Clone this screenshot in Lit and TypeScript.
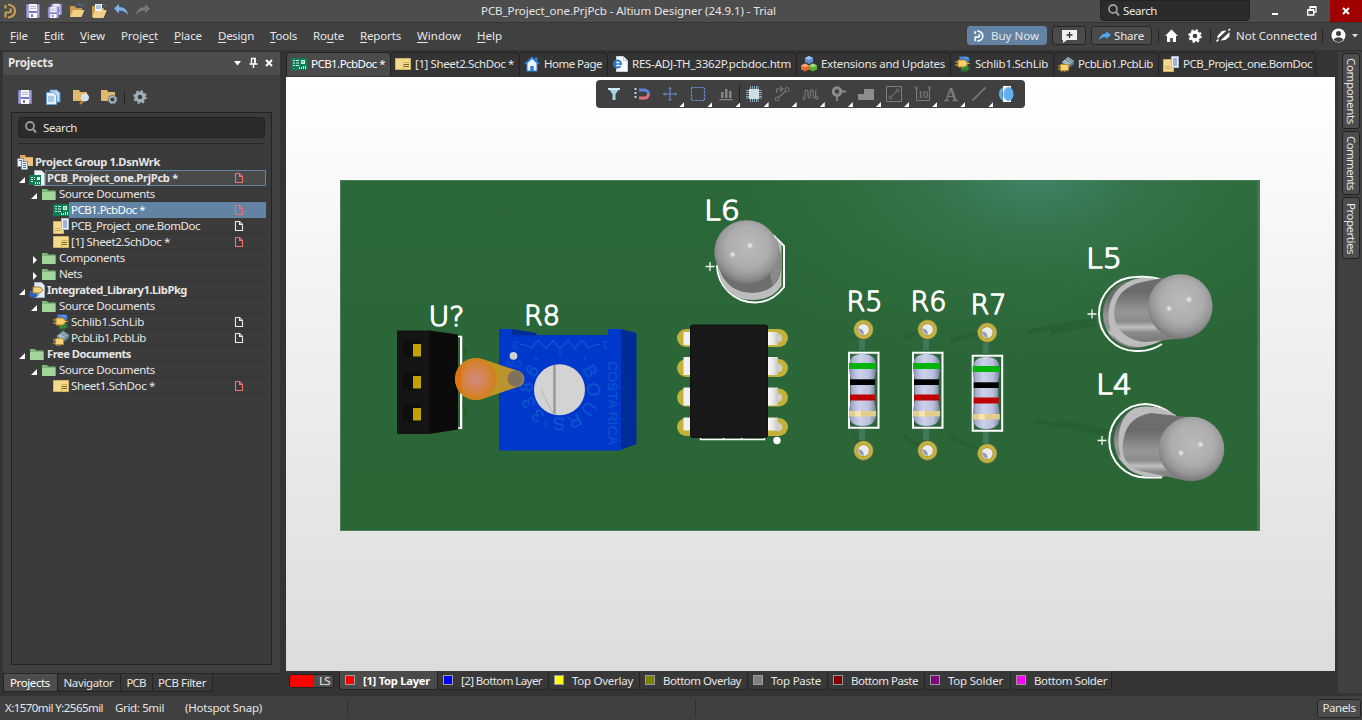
import { LitElement, html, svg, css, nothing } from "lit";
import { customElement, property } from "lit/decorators.js";

/** Single line of text, tracked so that it fills a given width. */
@customElement("ui-label")
class UiLabel extends LitElement {
  @property() text = "";
  @property({ type: Number }) w = 0;
  @property({ type: Number }) accel = -1;
  static styles = css`
    :host { display: block; flex: none; white-space: pre; line-height: 16px; }
    u { text-underline-offset: 2px; text-decoration-thickness: 1px; }
  `;
  firstUpdated() {
    const span = this.renderRoot.querySelector("span")!;
    const natural = span.offsetWidth ? span.getBoundingClientRect() : null;
    if (!natural || !this.w) return;
    const vertical = getComputedStyle(this).writingMode !== "horizontal-tb";
    const size = vertical ? natural.height : natural.width;
    span.style.letterSpacing = `${(this.w - size) / this.text.length}px`;
  }
  render() {
    const t = this.text, a = this.accel;
    return a < 0
      ? html`<span>${t}</span>`
      : html`<span>${t.slice(0, a)}<u>${t[a]}</u>${t.slice(a + 1)}</span>`;
  }
}

const label = (text: string, w: number, accel = -1) =>
  html`<ui-label .text=${text} .w=${w} .accel=${accel}></ui-label>`;

const icon = (body: unknown, w = 16, h = 16) =>
  html`<svg class="ic" width=${w} height=${h} viewBox="0 0 ${w} ${h}">${body}</svg>`;

const floppy = svg`<path d="M1 1h14v14H1z" fill="#7b79bd"/><path d="M2 2h2v12H2zM12 2h2v12h-2z" fill="#a5a3dc"/><path d="M4 1h8v7H4z" fill="#f4f4fb"/><path d="M5 3h6v1H5zM5 5h6v1H5z" fill="#b9b9d4"/><path d="M4 10h8v5H4z" fill="#fff"/><path d="M6 11h2v3H6z" fill="#7b79bd"/>`;
const folderY = svg`<path d="M1 3h5l1 2h6v3H4L1 14z" fill="#c99a4b"/><path d="M4 7h11.5l-3 7H1z" fill="#f2cf88"/>`;
const folderG = svg`<path d="M1 3h5l1 1.5h7.5V14H1z" fill="#7cb878"/><path d="M1 6h13.500v8H1z" fill="#a3d69a"/>`;
const pcbDoc = svg`<path d="M0 2h16v12H0z" fill="#0c7f55"/><path d="M2 4h2v1H2zM2 6.500h2v1H2zM2 9h2v1H2zM5 4h3v1H5zM5 6.500h3v1H5zM5 9h3v1H5zM10 4h4v4h-4zM8 11h1v2H8zM10 11h1v2h-1zM12 10h1v3h-1zM14 10h1v3h-1z" fill="#d9f2e4"/><path d="M11 5h2v2h-2z" fill="#7fc4a4"/>`;
const schDoc = svg`<path d="M.5 2.500h15v11H.5z" fill="#f3d98c" stroke="#d3b266"/><path d="M9 8.500h5M9 10.500h5" stroke="#7a6228" fill="none"/><path d="M8.500 7.500v5.500M8.500 6.500h6" stroke="#cfae5c" fill="none"/>`;
const bomDoc = svg`<path d="M.5 3.500h10v12H.5z" fill="#f3d98c" stroke="#d3b266"/><path d="M2 12.500h6M2 10.500h5" stroke="#d0ae60"/><path d="M8.500.5h7v11h-7z" fill="#eef3fb" stroke="#a9b8cf"/><path d="M10 3h4M10 5h4M10 7h4M10 9h4" stroke="#53719f"/>`;
const house = svg`<path d="M8 .5 0 8h2.500v7.500h11V8H16l-2.500-2.400V1.500H11v1.800z" fill="#2f80dc"/><path d="M8 3 3.500 7.200v7.300h3V10h3v4.500h3V7.200z" fill="#eaf3fd"/><path d="M6.500 10h3v5h-3z" fill="#2f80dc"/>`;
const ieDoc = svg`<path d="M4.500.5h7l4 4v11h-11z" fill="#fbfcfe" stroke="#c8d2df"/><path d="M11.500.5v4h4" fill="none" stroke="#b8c4d4"/><circle cx="5.500" cy="8" r="3.500" fill="none" stroke="#2c7fd0" stroke-width="2"/><path d="M3 8h6" stroke="#2c7fd0" stroke-width="1.500"/><path d="M8 9h2v1.200H8z" fill="#fbfcfe"/>`;
const cubes = svg`<path d="m8 0 4 2v4L8 8 4 6V2z" fill="#5c8fd6"/><path d="m8 0 4 2-4 2-4-2z" fill="#9cc0f0"/><path d="m4 7.500 4 2v4l-4 2-4-2v-4z" fill="#e2692f"/><path d="m4 7.500 4 2-4 2-4-2z" fill="#f7ab84"/><path d="m12 7.500 4 2v4l-4 2-4-2v-4z" fill="#55ad35"/><path d="m12 7.500 4 2-4 2-4-2z" fill="#a0dd80"/>`;
const schLib = svg`<path d="M4 .5h7q3.500 0 3.500 3T11 7H6z" fill="#3f7fe0"/><path d="M5 1.500h6q2 0 2.500 1z" fill="#8fb8f4"/><path d="M6 8.500h7v6H6z" fill="#2e8a34"/><path d="M7 15v1M9 15v1M11 15v1M13 11h2M13 13h2" stroke="#2e8a34"/><path d="M3 4h7l3 3.500L10 11H3z" fill="#f6cf6b" stroke="#ad8024"/><path d="M0 6h3M0 9h3M13 7.500h2" stroke="#d9ac4a"/>`;
const pcbLib = svg`<path d="m4 6 6-5 6 4v3l-6 5-6-4z" fill="#5f7885"/><path d="m4 6 6-5 6 4-6 5z" fill="#a3bbc6"/><path d="m7 3 6 4M9 2l6 4" stroke="#5f7885"/><path d="M2.500 8.500h8v6h-8z" fill="#f6d27a" stroke="#b58b32"/><path d="M0 10h2M0 13h2M4 15v1M7 15v1" stroke="#e2b75a"/>`;
const prjPcb = svg`<path d="M5.500.5h7l3 3v12h-10z" fill="#f1f3f8" stroke="#a9b1c4"/><path d="M0 5h12v10H0z" fill="#0c7f55"/><path d="M2 7h2v1H2zM2 9h2v1H2zM2 11h2v1H2zM5 7h1v1H5zM5 9h1v1H5zM8 7h3v3H8zM6 12h1v2H6zM8 12h1v2H8zM10 12h1v2h-1z" fill="#d9f2e4"/>`;
const libPkg = svg`<path d="M5.500.5h7l3 3v12h-10z" fill="#e4eaf4" stroke="#a9b1c4"/><path d="M1 9h7v6H1z" fill="#2d62b5"/><path d="M0 11h10M0 13h10M3 8v8M6 8v8" stroke="#2d62b5"/><path d="M4 5h7l3 3-3 3H4z" fill="#f6d27a" stroke="#a97f2a"/>`;
const group = svg`<path d="M3 1h5l1 2h7v9H3z" fill="#e0a860"/><path d="M5 4h11v8H5z" fill="#efc184"/><path d="M.5 4.500h6v8h-6z" fill="#e8edf6" stroke="#7f8fae"/><path d="M4.500 7.500h6v8h-6z" fill="#e8edf6" stroke="#7f8fae"/><path d="M6 9.500h3M6 11.500h3M6 13.500h3M2 6.500h3" stroke="#54709c"/>`;
const magnifier = svg`<circle cx="5" cy="5" r="4" fill="none" stroke="#9a9a9a" stroke-width="1.800"/><path d="m8 8 3 3.500" stroke="#9a9a9a" stroke-width="2"/>`;
const gearPath = (c: string, hole: string) => svg`<circle cx="8" cy="8" r="5.400" fill=${c}/><circle cx="8" cy="8" r="5.800" fill="none" stroke=${c} stroke-width="2" stroke-dasharray="2.300 2.250"/><circle cx="8" cy="8" r="2.300" fill=${hole}/>`;
const altium = (c: string) => svg`<path d="M2.500 2v3.500M5 1.500q7 1 7 6.500T5 14.500M2.500 14.500V9.500h4q2-1 1-4" fill="none" stroke=${c} stroke-width="2.200" stroke-linejoin="round"/>`;
const chip = svg`<path d="M3 3h10v10H3z" fill="#c9dfe8"/><path d="M4.500 0v16M6.500 0v16M8.500 0v16M10.500 0v16M12 0v16M0 4.500h16M0 6.500h16M0 8.500h16M0 10.500h16M0 12h16" stroke="#8eb6c6" stroke-width=".9"/><path d="M3 3h10v10H3z" fill="#d0dde3"/>`;

const sheet = (c: string) => icon(svg`<path d="M.5.5h4l3 3v6h-7zM4.500.5v3h3" fill="none" stroke=${c} stroke-width="1.100"/>`, 9, 10);

interface Row { t: string; w: number; lvl: number; ic: unknown; tw?: "o" | "c"; b?: boolean; doc?: string; st?: string }
const RED = "#f07070", WHT = "#e8e8e8";
const rows: Row[] = [
  { t: "Project Group 1.DsnWrk", w: 125, lvl: 0, ic: group, b: true },
  { t: "PCB_Project_one.PrjPcb *", w: 131, lvl: 1, ic: prjPcb, tw: "o", b: true, doc: RED, st: "focus" },
  { t: "Source Documents", w: 96, lvl: 2, ic: folderG, tw: "o" },
  { t: "PCB1.PcbDoc *", w: 74, lvl: 3, ic: pcbDoc, doc: RED, st: "sel" },
  { t: "PCB_Project_one.BomDoc", w: 129, lvl: 3, ic: bomDoc, doc: WHT },
  { t: "[1] Sheet2.SchDoc *", w: 99, lvl: 3, ic: schDoc, doc: RED },
  { t: "Components", w: 66, lvl: 2, ic: folderG, tw: "c" },
  { t: "Nets", w: 23, lvl: 2, ic: folderG, tw: "c" },
  { t: "Integrated_Library1.LibPkg", w: 140, lvl: 1, ic: libPkg, tw: "o", b: true },
  { t: "Source Documents", w: 96, lvl: 2, ic: folderG, tw: "o" },
  { t: "Schlib1.SchLib", w: 73, lvl: 3, ic: schLib, doc: WHT },
  { t: "PcbLib1.PcbLib", w: 75, lvl: 3, ic: pcbLib, doc: WHT },
  { t: "Free Documents", w: 84, lvl: 1, ic: folderG, tw: "o", b: true },
  { t: "Source Documents", w: 96, lvl: 2, ic: folderG, tw: "o" },
  { t: "Sheet1.SchDoc *", w: 84, lvl: 3, ic: schDoc, doc: RED },
];

const menus: [string, number, number][] = [
  ["File", 18, 0], ["Edit", 20, 0], ["View", 25, 0], ["Project", 37, 5], ["Place", 28, 0], ["Design", 36, 0],
  ["Tools", 27, 0], ["Route", 31, 2], ["Reports", 41, 0], ["Window", 44, 0], ["Help", 25, 0],
];

// title, text width, tab width, icon
const docTabs: [string, number, number, unknown][] = [
  ["PCB1.PcbDoc *", 74, 104, pcbDoc], ["[1] Sheet2.SchDoc *", 99, 129, schDoc], ["Home Page", 58, 88, house],
  ["RES-ADJ-TH_3362P.pcbdoc.htm", 159, 189, ieDoc], ["Extensions and Updates", 124, 154, cubes],
  ["Schlib1.SchLib", 73, 103, schLib], ["PcbLib1.PcbLib", 75, 105, pcbLib], ["PCB_Project_one.BomDoc", 129, 158, bomDoc],
];

const layers: [string, number, number, string][] = [
  ["[1] Top Layer", 67, 98, "#ff0000"], ["[2] Bottom Layer", 81, 111, "#0000ff"], ["Top Overlay", 61, 91, "#ffff00"],
  ["Bottom Overlay", 78, 108, "#808000"], ["Top Paste", 50, 80, "#808080"], ["Bottom Paste", 67, 97, "#800000"],
  ["Top Solder", 55, 86, "#800080"], ["Bottom Solder", 73, 102, "#ff00ff"],
];

const tools: { i: unknown; more?: boolean; sep?: boolean }[] = [
  { i: svg`<path d="M2 2h12L9.500 8v6h-3V8z" fill="#a9d3e2"/><path d="M2 2h12v2H2z" fill="#d4edf5"/>` },
  { i: svg`<path d="M5 4h5.500a4 4 0 0 1 4 4" fill="none" stroke="#5b83d8" stroke-width="3"/><path d="M14.500 8a4 4 0 0 1-4 4H5" fill="none" stroke="#e07080" stroke-width="3"/><path d="M1.500 2v12" stroke="#b8d4e8" stroke-width="2" stroke-dasharray="2 2"/>` },
  { i: svg`<path d="M8 1.500v13M1.500 8h13M6.500 3 8 1.500 9.500 3M6.500 13 8 14.500 9.500 13M3 6.500 1.500 8 3 9.500M13 6.500 14.500 8 13 9.500" fill="none" stroke="#6b8fd9"/>`, more: true },
  { i: svg`<path d="M1.500 1.500h13v13h-13z" fill="none" stroke="#6b8fd9" stroke-width="1.200" stroke-dasharray="2.300 1"/>`, more: true },
  { i: svg`<path d="M3 6h2.500v6H3zM7 3h2.500v9H7zM11 5h2.500v7H11zM1.500 13h13v1.200h-13z" fill="#858585"/>`, more: true, sep: true },
  { i: chip, more: true },
  { i: svg`<path d="M3.500 12 12 5M2.500 7V3h6M6 .5 9 3 6 5.500" fill="none" stroke="#777" stroke-width="1.200"/><circle cx="13" cy="3.500" r="2" fill="none" stroke="#777"/><circle cx="3" cy="13" r="2" fill="#404040" stroke="#777"/>`, more: true },
  { i: svg`<path d="M3 11.500V6.500Q3 4 4.500 4T6 6.500v3.500q0 2 1.200 2T8.400 10V6.500Q8.400 4 9.800 4t1.400 2.500V10q0 2 1.200 2t1.200-2V6q0-2 1.200-2" fill="none" stroke="#777" stroke-width="1.200"/><circle cx="2" cy="12.500" r="1.300" fill="none" stroke="#777"/><circle cx="15" cy="12" r="1.300" fill="none" stroke="#777"/>`, more: true },
  { i: svg`<circle cx="7" cy="5.500" r="3.800" fill="none" stroke="#8b8b8b" stroke-width="3"/><path d="M7 9v6M11 5.500h5" stroke="#8b8b8b" stroke-width="1.800"/>`, more: true },
  { i: svg`<path d="M0 14V8h6V3h10v11z" fill="#8d8d8d"/>`, more: true },
  { i: svg`<path d="M.5.5h15v15H.5z" fill="none" stroke="#7d7d7d"/><path d="m5.500 10.500 5-5" stroke="#7d7d7d"/><circle cx="4.500" cy="11.500" r="1.500" fill="none" stroke="#7d7d7d"/><circle cx="11.500" cy="4.500" r="1.500" fill="none" stroke="#7d7d7d"/>`, more: true },
  { i: svg`<path d="M1.500 3v11.500h13V3" fill="none" stroke="#7a7a7a"/><circle cx="1.500" cy="2" r="1.200" fill="none" stroke="#7a7a7a"/><circle cx="14.500" cy="2" r="1.200" fill="none" stroke="#7a7a7a"/><text x="8" y="12" text-anchor="middle" font-family="Liberation Serif" font-size="10" fill="#8f8f8f">10</text>`, more: true },
  { i: svg`<text x="8" y="14.500" text-anchor="middle" font-family="Liberation Serif" font-size="19" fill="#7d7d7d" stroke="#7d7d7d" stroke-width=".4">A</text>`, more: true },
  { i: svg`<path d="M1.500 14.500 14.500 1.500" stroke="#808080" stroke-width="1.400"/>`, more: true },
  { i: svg`<path d="M4 0h8v16H4z" fill="#fff"/><path d="M4.500 1Q0 3 0 8t4.500 7Q2.500 8 4.500 1" fill="#62b0ee"/><ellipse cx="9.500" cy="8" rx="5" ry="7" fill="#62b0ee"/>` },
];

/* ---- 3D board view ---- */
const silk = (t: string, x: number, y: number) => svg`<text class="silk" x=${x} y=${y} textLength="36" lengthAdjust="spacingAndGlyphs">${t}</text>`;
const plus = (x: number, y: number) => svg`<path d="M${x - 4.500} ${y}h9M${x} ${y - 4.500}v9" stroke="#f2f7f2" stroke-width="1.300"/>`;
const glint = (x: number, y: number) => svg`<circle cx=${x} cy=${y} r="3.500" fill="url(#glint)"/>`;
const pad = (x: number, y: number) => svg`
  <circle cx=${x} cy=${y} r="10" fill="#8a8553"/><circle cx=${x} cy=${y} r="9.300" fill="#c4b23c"/>
  <circle cx=${x} cy=${y} r="6" fill="#8c8438"/><circle cx=${x} cy=${y} r="5.500" fill="#ebebeb"/>
  <path d="M${x - 5.300} ${y - 1}q5-1 6 6q-5 0-6-6" fill="#9a9cb4"/>`;
const resistor = (dx: number, dy: number) => svg`<g transform="translate(${dx} ${dy})">
  <path d="M862 340v10M862 428v12" stroke="#40785a" stroke-width="6"/>
  ${pad(863.500, 329.500)}${pad(863.500, 450.500)}
  <path d="M849 352.700h29.500v75H849z" fill="none" stroke="#fff" stroke-width="2"/>
  <path d="M849 366q0-12 13.500-12T876 366q0 6-1.500 12v24q1.500 6 1.500 12 0 12-13.500 12T849 414q0-6 1.500-12v-24Q849 372 849 366" fill="url(#res)"/>
  <path d="M849 363h27v6h-27z" fill="#04b40c"/><path d="M850 379.300h25v5.700h-25z" fill="#000"/>
  <path d="M850 394.500h25v6h-25z" fill="#bd0202"/><path d="M849 411h27v5.500h-27z" fill="#e4cd8c"/>
  <path d="M855 411h6v5.500h-6z" fill="#f6e6b4"/></g>`;
const around: [string, number, number][] = [
  ["B", 590.500, 371], ["O", 593.500, 389.500], ["U", 589, 409], ["R", 575, 421], ["S", 559, 424], ["3", 537.500, 416],
  ["3", 528.500, 402.500], ["8", 526, 387], ["6", 532, 370.500],
];
const leads: [number, number][] = [[332, 13], [357, 18], [387.500, 18], [417.500, 13]];

const scene = () => svg`
<defs>
  <linearGradient id="board" x1="0" y1="0" x2="0" y2="1"><stop offset="0" stop-color="#2b6839"/><stop offset="1" stop-color="#2a6536"/></linearGradient>
  <radialGradient id="shine" gradientUnits="userSpaceOnUse" cx="0" cy="0" r="1" gradientTransform="translate(1035 172) scale(330 190)"><stop offset="0" stop-color="#468a72" stop-opacity=".85"/><stop offset=".3" stop-color="#3c7c5a" stop-opacity=".6"/><stop offset=".6" stop-color="#337244" stop-opacity=".55"/><stop offset="1" stop-color="#2e6c3c" stop-opacity="0"/></radialGradient>
  <radialGradient id="dome" cx=".52" cy=".42" r=".6"><stop offset="0" stop-color="#bababa"/><stop offset=".55" stop-color="#adadad"/><stop offset=".8" stop-color="#949494"/><stop offset="1" stop-color="#707070"/></radialGradient>
  <linearGradient id="tube" x1="0" y1="0" x2="0" y2="1"><stop offset="0" stop-color="#707070"/><stop offset=".25" stop-color="#6a6a6a"/><stop offset=".55" stop-color="#969696"/><stop offset=".7" stop-color="#8c8c8c"/><stop offset=".78" stop-color="#c0c0c0"/><stop offset=".86" stop-color="#8a8a8a"/><stop offset="1" stop-color="#787878"/></linearGradient>
  <radialGradient id="glint"><stop offset="0" stop-color="#fff" stop-opacity=".8"/><stop offset="1" stop-color="#fff" stop-opacity="0"/></radialGradient>
  <linearGradient id="res"><stop offset="0" stop-color="#8085a8"/><stop offset=".15" stop-color="#aeb4d4"/><stop offset=".4" stop-color="#cdd2ea"/><stop offset=".75" stop-color="#b9bfdd"/><stop offset="1" stop-color="#7b80a0"/></linearGradient>
  <radialGradient id="hot"><stop offset="0" stop-color="#cf8a80"/><stop offset=".5" stop-color="#d68350"/><stop offset="1" stop-color="#d08018"/></radialGradient>
  <linearGradient id="lead"><stop offset="0" stop-color="#fff"/><stop offset=".6" stop-color="#e8e8e8"/><stop offset="1" stop-color="#c4c4c4"/></linearGradient>
</defs>
<path d="M340 180h920v351H340z" fill="url(#board)"/>
<path d="M340 180h920v351H340z" fill="url(#shine)"/>
<path d="M340.500 180.500h919v350h-919z" fill="none" stroke="#4d7f58"/><path d="M1257 181h2.500v349h-2.500z" fill="#3f7a4c"/>
<g stroke="#245c2f" stroke-width="4" opacity=".6" fill="none"><path d="m1027 332 68-13M1051 332l45-8M1034 421l72 13M1058 421l50 10M903 338l18-6M950 341l28-8M903 435l20 14M950 437l32 14M852 337l8-5M852 435l8 8"/></g>
${silk("L6", 704, 220)}${silk("R5", 846.500, 311)}${silk("R6", 910.500, 311)}${silk("R7", 970.500, 314)}
${silk("L5", 1086, 267.500)}${silk("L4", 1096, 393.500)}${silk("U?", 428.500, 325.500)}${silk("R8", 524, 324.500)}
${plus(710, 266.500)}${plus(1092, 314)}${plus(1102, 440.500)}

<path d="M462 349q4 0 3 5M462 406q4 2 3 8" stroke="#2c5a1c" stroke-width="2" fill="none"/>
<path d="M458 336.500h3.500V428H458" fill="#2c6637" stroke="#fff" stroke-width="1.500"/><path d="M461 336v93" stroke="#fff" stroke-width="2"/>
<path d="M397 330.500h33v103.500h-33z" fill="#151515"/><path d="m429 330.500 29 4v95l-29 4.500z" fill="#0b0b0b"/>
<path d="M403 340h18v17h-18zM403 372h18v18h-18zM403 404h18v18h-18z" fill="#0e0e0e"/>
<path d="M413 344h8v12.500h-8zM413 376h8v12.500h-8zM413 408h8v12.500h-8z" fill="#bfa300"/>

<path d="m620.500 329 16 4v111l-16 6z" fill="#002c98"/>
<path d="M499 329h13l2 6h94v-6h13v121.500H499z" fill="#0038cc"/><path d="m512 329 24.500 4v2.200H512z" fill="#002c98"/>
<g fill="#0a58cf" font-family="Liberation Sans" font-size="18" text-anchor="middle">
  ${around.map(([c, x, y]) => svg`<text transform="translate(${x} ${y}) rotate(${(Math.atan2(x - 559.500, 389.500 - y) * 180) / Math.PI})" y="6.300">${c}</text>`)}
  <text transform="translate(546 424) rotate(200)" y="3.500" font-size="9">®</text>
  <text transform="translate(608 403) rotate(90)" font-size="12.500" textLength="84" lengthAdjust="spacingAndGlyphs">COSTA RICA</text>
  <text transform="translate(515.500 344.500) rotate(180)" y="4" font-size="11.500">3</text>
  <text transform="translate(605 344.500) rotate(180)" y="4" font-size="11.500">1</text>
  <text transform="translate(514 364) rotate(180)" y="3.500" font-size="9.500">CW</text>
</g>
<path d="M520 344.500h5l6 4 7-8 8 8 7-8 7 8 8-8 7 8 7-8 7 8 6-4h5M560 351v5M534 357l4 3.500M586 357l-3 3.500" fill="none" stroke="#0a58cf" stroke-width="1.200"/>
<circle cx="559.500" cy="389.700" r="25.500" fill="#d3d3d3"/><path d="M554.500 365v49" stroke="#9b9b9b" stroke-width="2.600"/><path d="m541 390 12 23" stroke="#b4b4b4"/>
<circle cx="513.500" cy="355.800" r="3.900" fill="#cfd0d2"/>
<path d="M483 359.200 518 370.800a8.200 8.200 0 0 1 0 16L483 398.800A21 21 0 1 1 483 359.200" fill="#c99a22" opacity=".93"/>
<circle cx="476" cy="379" r="20.800" fill="url(#hot)"/><path d="M461.500 364.500A20.800 20.800 0 0 0 461.500 394z" fill="#e0700c" opacity=".85"/>
<circle cx="515.500" cy="378.500" r="8" fill="#80705c"/>

${[338, 368, 397.500, 427].map((y, i) => svg`
  <rect x="677" y=${y - 9} width="22" height="18" rx="9" fill="#c3b23a"/><rect x="760" y=${y - 9} width="28" height="18" rx="9" fill="#c3b23a"/>
  <circle cx="778" cy=${y} r="4.200" fill="#cfcfcf"/>
  <rect x="683.500" y=${leads[i][0]} width="9" height=${leads[i][1]} fill="#f1f1f1"/><rect x="766" y=${leads[i][0]} width="12" height=${leads[i][1]} fill="url(#lead)"/>`)}
<path d="M700.500 437v2.500h64V437M723.500 437v2.500M741.500 437v2.500" fill="none" stroke="#fff" stroke-width="1.500"/>
<rect x="690" y="324.500" width="78" height="113.500" rx="3" fill="#151515"/><rect x="691.500" y="326" width="75" height="110" rx="2" fill="#191919"/>
<circle cx="777" cy="440.500" r="3.700" fill="#fff"/>
${resistor(0, 0)}${resistor(64, 0)}${resistor(123.700, 3)}

<path d="M773 235l11 11v41q-12 15.500-29 15.500A38 38 0 0 1 717 265" fill="none" stroke="#fff" stroke-width="2"/>
<path d="M717.500 262q2 38 36 38 18 0 28-14v-42l-8-7z" fill="#bdbdbd"/>
<path d="M719 268q8 25 34 25 28-2 28-28l-3-22z" fill="#6e6e6e"/><path d="M773 286q9-10 8-31l-5-18-6 38z" fill="#8a8a8a"/>
<ellipse cx="746.500" cy="252" rx="32.200" ry="31.800" fill="url(#dome)"/>${glint(750, 245.500)}${glint(732.500, 254.500)}

<path d="M1162 280q-12-4-26-3a37 37 0 0 0 0 74q14 1 26-7" fill="none" stroke="#fff" stroke-width="2"/>
<ellipse cx="1135" cy="314" rx="32" ry="34" fill="url(#tube)"/>
<path d="M1157 279q-18-4-31 4-17 10-17.500 32T1124 344q16 8 41-5z" fill="#bcbcbc"/>
<path d="M1142 282l38-7.500v64L1146 342q-12 0-22-8t-10-22q2-24 28-30" fill="url(#tube)"/>
<ellipse cx="1180.300" cy="306.500" rx="32.300" ry="32.300" fill="url(#dome)"/>${glint(1189, 299.500)}${glint(1169, 308.500)}

<path d="M1172 414q-12-9-26-10a36.750 36.750 0 0 0 0 73.500h16" fill="none" stroke="#fff" stroke-width="2"/>
<ellipse cx="1146" cy="440.500" rx="32" ry="34" fill="url(#tube)"/>
<path d="M1176 415q-20-12-41-7-16 8-16.500 32t14.500 32q16 8 33 4z" fill="#bcbcbc"/>
<path d="M1151 413l36 4v64l-41-9q-12-1-19-10t-3-25q4-20 27-24" fill="url(#tube)"/>
<ellipse cx="1191.500" cy="449" rx="32.800" ry="32.300" fill="url(#dome)"/>${glint(1200.500, 444.500)}${glint(1181, 453)}
`;

@customElement("app-root")
class AppRoot extends LitElement {
  static styles = css`
    :host { display: block; }
    * { box-sizing: border-box; }
    .app { width: 1362px; height: 720px; display: flex; flex-direction: column; overflow: hidden; background: #343434; color: #e6e6e6; font: 11.500px "Noto Sans", "Open Sans", sans-serif; }
    .ic { display: block; flex: none; overflow: visible; }
    .row { display: flex; align-items: center; }
    .title { height: 23px; background: #4d4d4d; border-bottom: 1px solid #333; flex: none; display: grid; grid-template-columns: 481px 619px 150px 1fr; }
    .quick { display: flex; align-items: center; padding: 0 0 0 3px; gap: 6px; }
    .tsearch { height: 21px; background: #2b2b2b; border: 1px solid #222; border-radius: 0 0 4px 4px; padding-left: 7px; gap: 3px; }
    .win { display: flex; justify-content: flex-end; }
    .win > div { height: 22px; display: grid; place-items: center; width: 37px; }
    .win > .close { width: 32px; background: #a00000; }
    .menu { height: 27px; background: #404040; flex: none; padding: 0 0 2px 10px; gap: 16px; }
    .right { margin-left: auto; display: flex; align-items: center; height: 100%; }
    .btn { height: 19px; border: 1px solid #262626; background: #4a4a4a; border-radius: 3px; display: flex; align-items: center; }
    .buy { width: 80px; background: #6283a4; border-color: #6283a4; padding-left: 4px; gap: 3px; margin-right: 5px; }
    .chat { width: 34px; justify-content: center; margin-right: 5px; }
    .share { width: 61px; padding-left: 7px; gap: 3px; margin-right: 6px; }
    .sep { width: 1px; height: 14px; background: #262626; flex: none; }
    .sep.home { margin-right: 6px; }
    .sep.plug { margin: 0 5px 0 7px; }
    .sep.user { margin: 0 8px 0 5px; }
    .gap { width: 6px; flex: none; }
    .gap.wide { width: 9px; }
    .gap.slim { width: 5px; }
    .main { display: flex; height: 646px; padding-top: 2px; flex: none; }
    .left { width: 277px; margin-left: 3px; display: flex; flex-direction: column; height: 644px; }
    .phead { height: 23px; background: #4d4d4d; padding: 0 6px 2px 5px; font-weight: 700; }
    .phead .grow { flex: 1; }
    .phead .ic { margin-left: 5px; }
    .pbody { background: #404040; height: 599px; padding: 13px 8px 8px; border-bottom: 1px solid #262626; }
    .ptools { height: 18px; padding-left: 6px; gap: 12px; margin-bottom: 6px; }
    .cog { gap: 7px; margin-left: -5px; }
    .box { height: 553px; border: 1px solid #222; background: #3b3b3b; padding: 4px 6px; }
    .psearch { height: 21px; background: #2b2b2b; border: 1px solid #232323; border-radius: 4px; padding-left: 6px; gap: 6px; }
    .rule { height: 1px; background: #262626; margin: 5px 0 10px; }
    .tr { height: 16px; display: flex; margin-right: -1px; }
    .tw { width: 11px; display: flex; justify-content: center; align-items: center; padding: 3px 4px 0 0; }
    .cell { flex: 1; display: flex; align-items: center; justify-content: space-between; padding: 1px 22px 0 2px; height: 16px; border-bottom: 1px solid #343434; }
    .first .cell { border-color: transparent; }
    .l1 { padding-left: 0; } .l2 { padding-left: 12px; } .l3 { padding-left: 35px; }
    .l0 { margin-left: -1px; }
    .bold { font-weight: 700; font-size: 11.200px; }
    .focus .cell { border: 1px solid #6283a4; background: #4a4a4a; padding: 0 21px 0 1px; }
    .sel .cell { background: #6283a4; border-color: #6283a4; color: #fff; }
    .ptabs { display: flex; height: 19px; }
    .ptab { border: 1px solid #242424; border-top: 0; border-right: 0; background: #383838; border-radius: 0 0 3px 3px; display: flex; justify-content: center; padding: 1px 1px 0 0; height: 18px; }
    .ptab:last-child { border-right: 1px solid #242424; }
    .on { background: #4d4d4d; color: #fff; }
    .t0 { width: 54px; } .t1 { width: 63px; } .t2 { width: 32px; } .t3 { width: 61px; }
    .center { width: 1049px; margin-left: 6px; }
    .dtabs { display: flex; height: 25px; }
    .dtab { height: 24px; background: #343434; border: 1px solid #222; border-right: 0; border-bottom: 0; border-radius: 4px 4px 0 0; display: flex; align-items: center; padding: 0 0 1px 4px; gap: 4px; flex: none; }
    .dtab.on { background: #4a4a4a; }
    .dtab:last-child { border-right: 1px solid #222; }
    .view { height: 594px; width: 1049px; background: linear-gradient(#fff, #dcdcdc); display: grid; }
    .view > * { grid-area: 1 / 1; }
    .bar { width: 429px; height: 28px; margin: 3px 0 0 310px; border-radius: 4px; background: #404040; display: flex; padding-left: 4px; }
    .tool { width: 28.100px; height: 28px; display: flex; flex-direction: column; align-items: center; padding-top: 6px; flex: none; border-right: 1px solid transparent; }
    .tool.sepd { border-image: linear-gradient(transparent 6px, #222 6px, #222 23px, transparent 23px) 1; }
    .corner { width: 5px; height: 5px; background: #fff; clip-path: polygon(100% 0, 100% 100%, 0 100%); align-self: flex-end; margin: 0 -1px 0 0; }
    .silk { font: 200 26.500px "DejaVu Sans", sans-serif; fill: #fff; stroke: #fff; stroke-width: 1.300px; stroke-linejoin: round; }
    .ltabs { display: flex; height: 19px; }
    .ls { width: 45px; height: 14px; margin: 3px 5px 0 3px; border: 1px solid #222; border-radius: 3px; background: #4d4d4d; display: flex; align-items: center; gap: 5px; overflow: hidden; }
    .ls i { width: 24px; height: 12px; background: #f00; }
    .ltab { height: 19px; border: 1px solid #242424; border-top: 0; border-right: 0; background: #383838; border-radius: 0 0 3px 3px; display: flex; padding: 2px 0 0 5px; gap: 8px; flex: none; }
    .ltab:last-child { border-right: 1px solid #242424; }
    .ltab.on { background: #4a4a4a; font-weight: 700; font-size: 11.200px; }
    .sw { width: 10px; height: 10px; border: 1px solid #999; margin-top: 2px; }
    .side { margin-left: 3px; width: 24px; height: 641px; background: #404040; padding: 1px 2px 0 4px; display: flex; flex-direction: column; gap: 2px; }
    .vtab { writing-mode: vertical-rl; border: 1px solid #222; border-radius: 3px; background: #4d4d4d; display: flex; align-items: center; justify-content: center; width: 18px; }
    .vtab.cs { height: 76px; } .vtab.cm { height: 64px; } .vtab.pr { height: 62px; }
    .status { height: 24px; background: #404040; display: grid; grid-template-columns: 115px 70px 162px 348px 1fr; align-items: center; flex: none; }
    .status > :first-child { padding-left: 5px; }
    .vs { border-left: 1px solid #303030; height: 17px; display: flex; justify-content: flex-end; align-items: center; padding-right: 1px; }
    .panels { width: 44px; justify-content: center; background: #4d4d4d; }
  `;

  render() {
    return html`<div class="app">
      <div class="title">
        <div class="quick">
          ${icon(altium("#c79c52"))}${icon(floppy)}${icon(svg`<g transform="translate(3 0) scale(.8)">${floppy}</g><g transform="translate(0 3) scale(.8)">${floppy}</g>`)}
          ${icon(svg`${folderY}<path d="M9 1.500q3-1 5 2l1-1.500" fill="none" stroke="#4a7fc0"/>`)}
          ${icon(svg`${folderY}<path d="M4 1h7v7H4z" fill="#f3f5fa"/><path d="M5 3h5M5 5h5" stroke="#6f8fc0"/><path d="M4 8h11.500l-3 7H2z" fill="#f2cf88"/><path d="M11 1q3 0 4 3" fill="none" stroke="#4a7fc0"/>`)}
          ${icon(svg`<path d="M1 5.500 6 1v3q8 0 9 8-3-4.500-9-4.500v3z" fill="#7fb0ea"/>`)}
          ${icon(svg`<path d="M15 5.500 10 1v3Q2 4 1 12q3-4.500 9-4.500v3z" fill="#767676"/>`)}
        </div>
        <div class="row">${label("PCB_Project_one.PrjPcb - Altium Designer (24.9.1) - Trial", 295)}</div>
        <div class="row tsearch">${icon(magnifier, 12, 13)}${label("Search", 34)}</div>
        <div class="win">
          <div>${icon(svg`<path d="M2 8h6v2H2z" fill="#fff"/>`, 10, 12)}</div>
          <div>${icon(svg`<path d="M3 3V1h6v5H7M.7 4h6v5h-6z" fill="none" stroke="#fff" stroke-width="1.300"/><path d="M3 1h6M1 4h6" stroke="#fff" stroke-width="2"/>`, 10, 10)}</div>
          <div class="close">${icon(svg`<path d="m1 1 6 6M7 1 1 7" stroke="#fff" stroke-width="2"/>`, 8, 8)}</div>
        </div>
      </div>

      <div class="row menu">
        ${menus.map(([t, w, a]) => label(t, w, a))}
        <div class="right">
          <div class="btn buy">${icon(svg`<g transform="scale(.8) translate(1.500 2)">${altium("#f0f4f8")}</g>`)}${label("Buy Now", 48)}</div>
          <div class="btn chat">${icon(svg`<path d="M1 1h15v10H6l-4 3v-3H1z" fill="#f0f0f0"/><path d="M8.500 3v6M5.500 6h6" stroke="#333" stroke-width="1.300"/>`, 17, 14)}</div>
          <div class="btn share">${icon(svg`<path d="m12 5-5-4v2.500Q1 4 0 10q3-3.500 7-3V9z" fill="#53a5f0"/>`, 12, 11)}${label("Share", 30)}</div>
          <div class="sep home"></div>
          ${icon(svg`<path d="M6.500.5 0 7h2v6h3.200V9h2.600v4H11V7h2z" fill="#fff"/>`, 13, 13)}
          <div class="gap wide"></div>
          ${icon(gearPath("#fff", "#404040"), 16)}
          <div class="sep plug"></div>
          ${icon(svg`<path d="M1.500 11V8L6 3l4.500-.5z" fill="#fff"/><path d="M4.500 12.500 13.500 4v4.500L9.500 12z" fill="#fff"/><path d="m.5 13.500 2-2M12.500 2.500l1.500-1.500" stroke="#fff" stroke-width="1.600"/>`, 15, 15)}
          <div class="gap slim"></div>
          ${label("Not Connected", 81)}
          <div class="sep user"></div>
          ${icon(svg`<circle cx="7.500" cy="7.500" r="7" fill="#fff"/><circle cx="7.500" cy="5.500" r="2.500" fill="#404040"/><path d="M2.500 11.500q5-4.500 10 0-2 2.500-5 2.500t-5-2.500" fill="#404040"/>`, 15, 15)}
          <div class="gap"></div>
          ${icon(svg`<path d="M0 0h6L3 3.500z" fill="#ddd"/>`, 10, 4)}
        </div>
      </div>

      <div class="main">
        <div class="left">
          <div class="row phead">${label("Projects", 45)}<div class="grow"></div>
            ${icon(svg`<path d="M1 3h7L4.500 7.500z" fill="#fff"/>`, 10, 10)}
            ${icon(svg`<path d="M3 .5h5M3.500.5v5M7 .5v5M1.500 6h8M5.500 6v4" stroke="#fff" stroke-width="1.400"/><path d="M6 1h1.500v5H6z" fill="#fff"/>`, 11, 10)}
            ${icon(svg`<path d="m2 2 6 6M8 2 2 8" stroke="#fff" stroke-width="2"/>`, 10, 10)}
          </div>
          <div class="pbody">
            <div class="row ptools">
              ${icon(floppy)}
              ${icon(svg`<path d="M5 1h7l3 3v9H5z" fill="#bcd7f2" stroke="#5c93cc"/><path d="M1.500 3.500h7l3 3v9h-10z" fill="#e6f1fb" stroke="#6ea2d6"/><path d="M3 8h6M3 10h6M3 12h6" stroke="#6ea2d6"/>`)}
              ${icon(svg`<path d="M0 1h6l1 2h7v9H0z" fill="#e0b86c"/><path d="m7 15 4-4" stroke="#c98f3c" stroke-width="2"/><circle cx="12" cy="8.500" r="3.500" fill="#c9e2f4" stroke="#e5edf5"/>`)}
              ${icon(svg`<path d="M0 1h6l1 2h7v9H0z" fill="#e0b86c"/><circle cx="11.500" cy="10.500" r="4.500" fill="#404040"/><circle cx="11.500" cy="10.500" r="3" fill="none" stroke="#9fb0b8" stroke-width="1.800"/><circle cx="11.500" cy="10.500" r="4.300" fill="none" stroke="#9fb0b8" stroke-dasharray="1.700 1.700"/>`)}
              <div class="row cog"><div class="sep"></div>${icon(gearPath("#a0b1ba", "#404040"))}</div>
            </div>
            <div class="box">
              <div class="row psearch">${icon(magnifier, 12, 13)}${label("Search", 34)}</div>
              <div class="rule"></div>
              ${rows.map((r) => html`<div class="tr l${r.lvl} ${r.st ?? ""} ${r.lvl ? "" : "first"} ${r.b ? "bold" : ""}">
                ${r.tw ? html`<div class="tw">${r.tw === "o" ? icon(svg`<path d="M6 0v6H0z" fill="#fff"/>`, 6, 6) : icon(svg`<path d="M2 0l4 4-4 4z" fill="#fff"/>`, 6, 8)}</div>` : nothing}
                ${icon(r.ic)}
                <div class="cell">${label(r.t, r.w)}${r.doc ? sheet(r.doc) : nothing}</div></div>`)}
            </div>
          </div>
          <div class="ptabs">
            <div class="ptab on t0">${label("Projects", 40)}</div>
            <div class="ptab t1">${label("Navigator", 50)}</div>
            <div class="ptab t2">${label("PCB", 19)}</div>
            <div class="ptab t3">${label("PCB Filter", 48)}</div>
          </div>
        </div>

        <div class="center">
          <div class="dtabs">${docTabs.map(([t, w, tw, ic], i) => html`<div class="dtab ${i ? "" : "on"}" style="width:${tw}px">${icon(ic)}${label(t, w)}</div>`)}</div>
          <div class="view">
            <svg width="1049" height="594" viewBox="286 77 1049 594">${scene()}</svg>
            <div class="bar">${tools.map((t) => html`<div class="tool ${t.sep ? "sepd" : ""}">${icon(t.i)}${t.more ? html`<div class="corner"></div>` : nothing}</div>`)}</div>
          </div>
          <div class="ltabs">
            <div class="ls"><i></i>${label("LS", 11)}</div>
            ${layers.map(([t, w, tw, c], i) => html`<div class="ltab ${i ? "" : "on"}" style="width:${tw}px"><div class="sw" style="background:${c}"></div>${label(t, w)}</div>`)}
          </div>
        </div>

        <div class="side">
          <div class="vtab cs">${label("Components", 66)}</div>
          <div class="vtab cm">${label("Comments", 54)}</div>
          <div class="vtab pr">${label("Properties", 51)}</div>
        </div>
      </div>

      <div class="status">
        <div>${label("X:1570mil Y:2565mil", 98)}</div>
        <div>${label("Grid: 5mil", 49)}</div>
        <div>${label("(Hotspot Snap)", 77)}</div>
        <div class="vs"></div>
        <div class="vs"><div class="btn panels">${label("Panels", 33)}</div></div>
      </div>
    </div>`;
  }
}
